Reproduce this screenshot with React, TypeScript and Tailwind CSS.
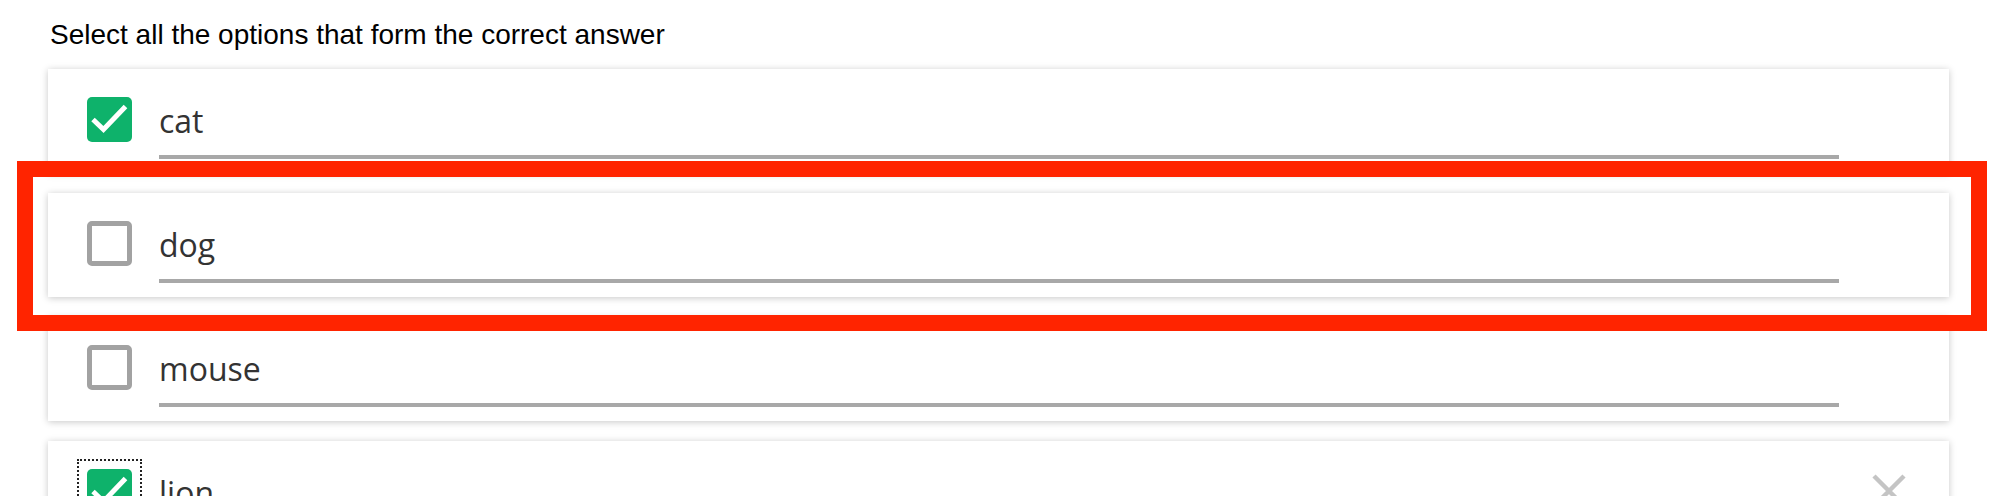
import React from 'react';

type Option = {
  label: string;
  checked: boolean;
  focused?: boolean;
  removable?: boolean;
  highlighted?: boolean;
};

const options: Option[] = [
  { label: 'cat', checked: true },
  { label: 'dog', checked: false, highlighted: true },
  { label: 'mouse', checked: false },
  { label: 'lion', checked: true, focused: true, removable: true },
];

function CheckBox({ checked, focused }: { checked: boolean; focused?: boolean }) {
  return (
    <div className="relative shrink-0">
      {checked ? (
        <div className="w-[45px] h-[45px] rounded-[5px] bg-[#0eb26b] flex items-center justify-center">
          <svg width="45" height="45" viewBox="0 0 45 45">
            <path d="M6 22.5 L16.5 32.5 L38.5 9.5" stroke="#fff" strokeWidth="5" fill="none" />
          </svg>
        </div>
      ) : (
        <div className="w-[45px] h-[45px] rounded-[5px] border-[5px] border-[#a2a2a2] bg-white" />
      )}
      {/* focus ring */}
      {focused && <span className="absolute -inset-[10px] border-2 border-dotted border-[#222]" />}
    </div>
  );
}

function OptionCard({ option }: { option: Option }) {
  return (
    <div className="relative bg-white shadow-[0_1px_7px_rgba(0,0,0,0.22)] flex items-start gap-[27px] pl-[39px] pr-[43px] pt-[28px] pb-[14px]">
      <CheckBox checked={option.checked} focused={option.focused} />
      <div className="flex-1 border-b-4 border-[#a8a8a8] pb-[10px]">
        <div className="h-[48px] leading-[48px] text-[32px] text-[#333] font-['Open_Sans',sans-serif]">{option.label}</div>
      </div>
      <div className="w-[34px] h-[34px] ml-[6px] mt-[5px] shrink-0 flex items-center justify-center">
        {option.removable && (
          <button className="w-[34px] h-[34px] flex items-center justify-center" aria-label="Remove">
            <svg width="34" height="34" viewBox="0 0 34 34">
              <path d="M2 2 L32 32 M32 2 L2 32" stroke="#c4c4c4" strokeWidth="4.5" fill="none" />
            </svg>
          </button>
        )}
      </div>
      {/* annotation frame */}
      {option.highlighted && (
        <div className="absolute z-10 -left-[31px] -top-[32px] -right-[38px] -bottom-[34px] border-[16px] border-[#ff2400] pointer-events-none" />
      )}
    </div>
  );
}

export default function App() {
  return (
    <div className="w-full min-h-screen bg-white px-12 pt-[19px] overflow-hidden">
      <div className="pl-[2px] text-[28px] leading-[32px] text-black font-['Liberation_Sans',Arial,sans-serif]">
        Select all the options that form the correct answer
      </div>
      <div className="mt-[18px] flex flex-col gap-5">
        {options.map((o) => (
          <OptionCard key={o.label} option={o} />
        ))}
      </div>
    </div>
  );
}
